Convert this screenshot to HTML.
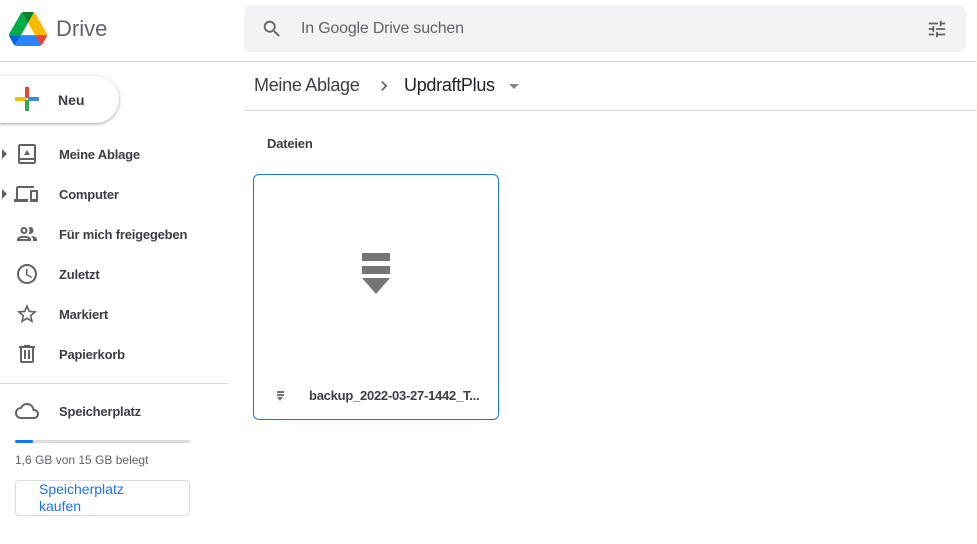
<!DOCTYPE html>
<html><head><meta charset="utf-8"><style>
*{box-sizing:border-box;margin:0;padding:0}
body{width:977px;height:544px;overflow:hidden;background:#fff;font-family:"Liberation Sans",Arial,sans-serif;color:#3c4043;position:relative}
.abs{position:absolute}
.nav{position:absolute;left:0;width:228px;height:40px;display:flex;align-items:center;font-size:13px;font-weight:bold;color:#3c4043;letter-spacing:-0.2px}
.nav .lbl{position:absolute;left:59px}
.nav svg{position:absolute;left:15px;top:8px}
.tri{position:absolute;left:2px;top:15px;width:0;height:0;border-top:5px solid transparent;border-bottom:5px solid transparent;border-left:5px solid #5f6368}
</style></head><body>
<svg class="abs" style="left:9px;top:12px" width="38" height="34" viewBox="0 0 87.3 78">
<path d="m6.6 66.85 3.850 6.65c.8 1.4 1.95 2.5 3.3 3.3l13.75-23.8h-27.5c0 1.55.4 3.1 1.2 4.5z" fill="#0066da"/>
<path d="m43.65 25-13.75-23.8c-1.35.8-2.5 1.9-3.3 3.3l-25.4 44a9.060 9.060 0 0 0 -1.2 4.5h27.5z" fill="#00ac47"/>
<path d="m73.55 76.8c1.35-.8 2.5-1.9 3.3-3.3l1.6-2.75 7.65-13.25c.8-1.4 1.2-2.95 1.2-4.5h-27.502l5.852 11.5z" fill="#ea4335"/>
<path d="m43.65 25 13.75-23.8c-1.35-.8-2.9-1.2-4.5-1.2h-18.5c-1.6 0-3.15.45-4.5 1.2z" fill="#00832d"/>
<path d="m59.8 53h-32.3l-13.75 23.8c1.35.8 2.9 1.2 4.5 1.2h50.8c1.6 0 3.15-.45 4.5-1.2z" fill="#2684fc"/>
<path d="m73.4 26.5-12.7-22c-.8-1.4-1.95-2.5-3.3-3.3l-13.75 23.8 16.15 28h27.45c0-1.55-.4-3.1-1.2-4.5z" fill="#ffba00"/>
</svg>
<div class="abs" style="left:56px;top:16px;font-size:22px;color:#5f6368">Drive</div>
<div class="abs" style="left:244px;top:5px;width:722px;height:47px;background:#f1f3f4;border-radius:8px"></div>
<svg class="abs" style="left:261px;top:18px" width="22" height="22" viewBox="0 0 24 24"><path fill="#5f6368" d="M15.5 14h-.79l-.28-.27A6.470 6.470 0 0 0 16 9.5 6.5 6.5 0 1 0 9.5 16c1.61 0 3.090-.59 4.230-1.570l.27.28v.79l5 4.990L20.490 19l-4.990-5zm-6 0C7.010 14 5 11.990 5 9.5S7.010 5 9.5 5 14 7.010 14 9.5 11.990 14 9.5 14z"/></svg>
<div class="abs" style="left:301px;top:20px;font-size:16px;color:#5f6368;letter-spacing:-0.2px">In Google Drive suchen</div>
<svg class="abs" style="left:926px;top:18px" width="22" height="22" viewBox="0 0 24 24"><path fill="#5f6368" d="M3 17v2h6v-2H3zM3 5v2h10V5H3zm10 16v-2h8v-2h-8v-2h-2v6h2zM7 9v2H3v2h4v2h2V9H7zm14 4v-2H11v2h10zm-6-4h2V7h4V5h-4V3h-2v6z"/></svg>
<div class="abs" style="left:0;top:61px;width:977px;height:1px;background:#dadce0"></div>
<div class="abs" style="left:0;top:76px;width:119px;height:47px;border-radius:0 24px 24px 0;box-shadow:0 1px 2px rgba(60,64,67,.3),0 1px 3px 1px rgba(60,64,67,.15);background:#fff"></div>
<div class="abs" style="left:25px;top:87px;width:4px;height:11px;background:#ea4335"></div>
<div class="abs" style="left:15px;top:97px;width:11px;height:4px;background:#fbbc04"></div>
<div class="abs" style="left:28px;top:97px;width:11px;height:4px;background:#4285f4"></div>
<div class="abs" style="left:25px;top:100px;width:4px;height:11px;background:#34a853"></div>
<div class="abs" style="left:58px;top:92px;font-size:14px;font-weight:bold;color:#3c4043">Neu</div>
<div class="nav" style="top:134px"><div class="tri"></div><svg width="24" height="24" viewBox="0 0 24 24"><path fill="#5f6368" d="M19 2H5c-1.1 0-2 .9-2 2v16c0 1.1.9 2 2 2h14c1.1 0 2-.9 2-2V4c0-1.1-.9-2-2-2zm0 18H5v-2h14v2zm0-4H5V4h14v12zM9 13h6l-3-5z"/></svg><span class="lbl">Meine Ablage</span></div>
<div class="nav" style="top:174px"><div class="tri"></div><svg width="26" height="24" viewBox="0 0 24 24" style="left:13px"><path fill="#5f6368" d="M4 6h16V4H4c-1.1 0-2 .9-2 2v11H0v3h14v-3H4V6zm19 2h-6c-.55 0-1 .45-1 1v10c0 .55.45 1 1 1h6c.55 0 1-.45 1-1V9c0-.55-.45-1-1-1zm-1 9h-4v-7h4v7z"/></svg><span class="lbl">Computer</span></div>
<div class="nav" style="top:214px"><svg width="24" height="24" viewBox="0 0 24 24"><path fill="#5f6368" d="M9 13.75c-2.34 0-7 1.17-7 3.5V19h14v-1.75c0-2.33-4.66-3.5-7-3.5zM4.34 17c.84-.58 2.87-1.25 4.66-1.25s3.82.67 4.66 1.25H4.34zM9 12c1.93 0 3.5-1.57 3.5-3.5S10.93 5 9 5 5.5 6.57 5.5 8.5 7.07 12 9 12zm0-5c.83 0 1.5.67 1.5 1.5S9.83 10 9 10s-1.5-.67-1.5-1.5S8.17 7 9 7zm7.04 6.81c1.16.84 1.96 1.96 1.96 3.44V19h4v-1.75c0-2.020-3.5-3.170-5.96-3.440zM15 12c1.93 0 3.5-1.57 3.5-3.5S16.93 5 15 5c-.54 0-1.04.13-1.5.35.63.89 1 1.98 1 3.15s-.37 2.26-1 3.15c.46.22.96.35 1.5.35z"/></svg><span class="lbl">Für mich freigegeben</span></div>
<div class="nav" style="top:254px"><svg width="24" height="24" viewBox="0 0 24 24"><path fill="#5f6368" d="M11.99 2C6.47 2 2 6.48 2 12s4.47 10 9.99 10C17.52 22 22 17.52 22 12S17.52 2 11.99 2zM12 20c-4.42 0-8-3.58-8-8s3.58-8 8-8 8 3.58 8 8-3.58 8-8 8zm.5-13H11v6l5.25 3.15.75-1.23-4.5-2.67z"/></svg><span class="lbl">Zuletzt</span></div>
<div class="nav" style="top:294px"><svg width="24" height="24" viewBox="0 0 24 24"><path fill="#5f6368" d="M22 9.24l-7.19-.62L12 2 9.19 8.63 2 9.24l5.46 4.73L5.82 21 12 17.27 18.18 21l-1.63-7.03L22 9.24zM12 15.4l-3.76 2.27 1-4.28-3.32-2.88 4.38-.38L12 6.1l1.71 4.04 4.38.38-3.32 2.88 1 4.28L12 15.4z"/></svg><span class="lbl">Markiert</span></div>
<div class="nav" style="top:334px"><svg width="24" height="24" viewBox="0 0 24 24"><path fill="#5f6368" d="M15 4V3H9v1H4v2h1v13c0 1.1.9 2 2 2h10c1.1 0 2-.9 2-2V6h1V4h-5zm2 15H7V6h10v13zM9 8h2v9H9zm4 0h2v9h-2z"/></svg><span class="lbl">Papierkorb</span></div>
<div class="abs" style="left:0;top:383px;width:228px;height:1px;background:#dadce0"></div>
<div class="nav" style="top:391px"><svg width="24" height="24" viewBox="0 0 24 24"><path fill="#5f6368" d="M19.35 10.04A7.49 7.49 0 0 0 12 4C9.11 4 6.6 5.64 5.35 8.04A5.994 5.994 0 0 0 0 14c0 3.31 2.69 6 6 6h13c2.76 0 5-2.24 5-5 0-2.64-2.05-4.78-4.65-4.96zM19 18H6c-2.21 0-4-1.79-4-4 0-2.05 1.53-3.76 3.56-3.97l1.07-.11.5-.95A5.469 5.469 0 0 1 12 6c2.62 0 4.88 1.86 5.39 4.43l.3 1.5 1.53.11A2.98 2.98 0 0 1 22 15c0 1.65-1.35 3-3 3z"/></svg><span class="lbl">Speicherplatz</span></div>
<div class="abs" style="left:15px;top:440px;width:175px;height:3px;background:#dadce0;border-radius:2px"></div>
<div class="abs" style="left:15px;top:440px;width:18px;height:3px;background:#1a73e8;border-radius:2px"></div>
<div class="abs" style="left:15px;top:453px;font-size:12px;color:#5f6368">1,6 GB von 15 GB belegt</div>
<div class="abs" style="left:15px;top:480px;width:175px;height:36px;border:1px solid #dadce0;border-radius:4px"></div>
<div class="abs" style="left:39px;top:481px;font-size:14px;line-height:17px;color:#1a73e8">Speicherplatz<br>kaufen</div>
<div class="abs" style="left:254px;top:75px;font-size:18px;color:#3c4043;letter-spacing:-0.3px">Meine Ablage</div>
<svg class="abs" style="left:374px;top:76px" width="20" height="20" viewBox="0 0 24 24"><path fill="#5f6368" d="M8.59 16.59 13.17 12 8.59 7.41 10 6l6 6-6 6z"/></svg>
<div class="abs" style="left:404px;top:75px;font-size:18px;color:#202124;letter-spacing:-0.3px">UpdraftPlus</div>
<div class="abs" style="left:509px;top:84px;border-left:5px solid transparent;border-right:5px solid transparent;border-top:5px solid #80868b"></div>
<div class="abs" style="left:244px;top:110px;width:733px;height:1px;background:#dadce0"></div>
<div class="abs" style="left:267px;top:136px;font-size:13px;font-weight:bold;color:#3c4043;letter-spacing:-0.2px">Dateien</div>
<div class="abs" style="left:253px;top:174px;width:246px;height:246px;border:1px solid #1a73e8;border-radius:6px"></div>
<div class="abs" style="left:362px;top:253px;width:28px;height:8px;background:#757575"></div>
<div class="abs" style="left:362px;top:266px;width:28px;height:8px;background:#757575"></div>
<div class="abs" style="left:362px;top:278px;border-left:14px solid transparent;border-right:14px solid transparent;border-top:16px solid #757575"></div>
<div class="abs" style="left:277px;top:391px;width:7px;height:2px;background:#757575"></div>
<div class="abs" style="left:277px;top:394px;width:7px;height:2px;background:#757575"></div>
<div class="abs" style="left:277px;top:397px;border-left:3.5px solid transparent;border-right:3.5px solid transparent;border-top:4px solid #757575"></div>
<div class="abs" style="left:309px;top:388px;font-size:13px;font-weight:bold;color:#3c4043;letter-spacing:-0.25px">backup_2022-03-27-1442_T...</div>
</body></html>
